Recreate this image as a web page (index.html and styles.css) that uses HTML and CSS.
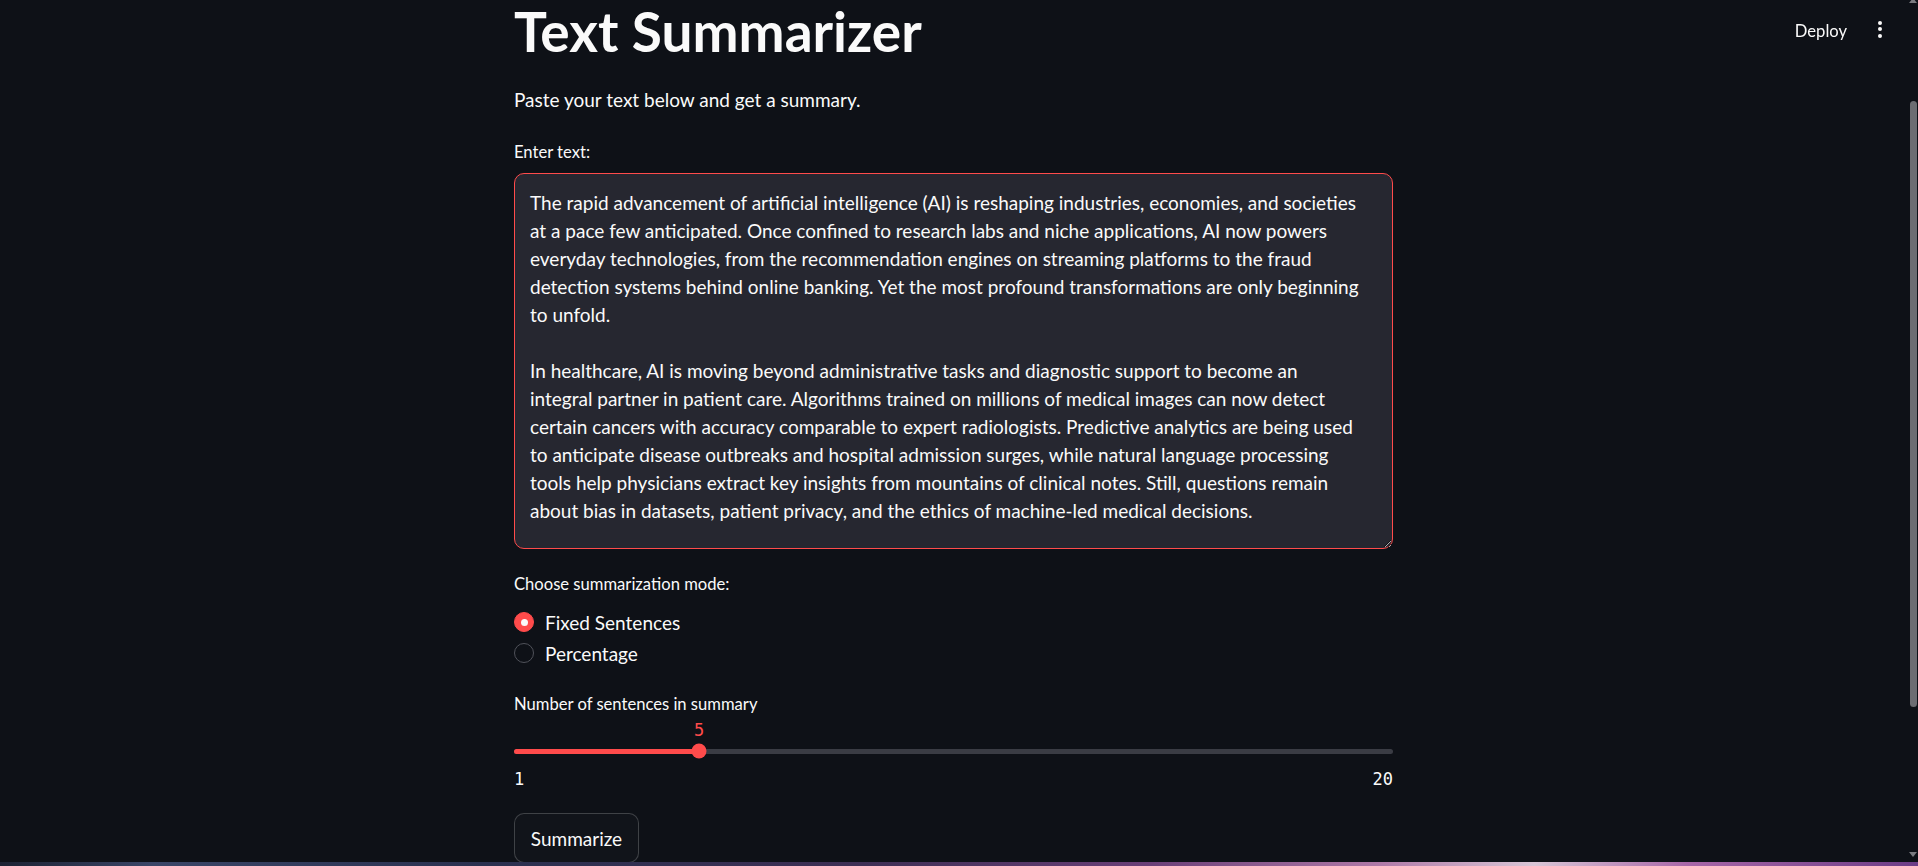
FILE: index.html
```html
<!DOCTYPE html>
<html lang="en">
<head>
<meta charset="utf-8">
<title>Text Summarizer</title>
<link rel="stylesheet" href="styles.css">
</head>
<body>
<header class="app-header">
  <span class="deploy">Deploy</span>
  <span class="kebab"><i></i><i></i><i></i></span>
</header>
<main class="main">
  <div class="block">
    <h1 class="title">Text Summarizer</h1>
    <p class="intro">Paste your text below and get a summary.</p>
    <label class="wlabel lbl-text" for="txt">Enter text:</label>
    <textarea id="txt" class="ta" wrap="off" spellcheck="false">The rapid advancement of artificial intelligence (AI) is reshaping industries, economies, and societies
at a pace few anticipated. Once confined to research labs and niche applications, AI now powers
everyday technologies, from the recommendation engines on streaming platforms to the fraud
detection systems behind online banking. Yet the most profound transformations are only beginning
to unfold.

In healthcare, AI is moving beyond administrative tasks and diagnostic support to become an
integral partner in patient care. Algorithms trained on millions of medical images can now detect
certain cancers with accuracy comparable to expert radiologists. Predictive analytics are being used
to anticipate disease outbreaks and hospital admission surges, while natural language processing
tools help physicians extract key insights from mountains of clinical notes. Still, questions remain
about bias in datasets, patient privacy, and the ethics of machine-led medical decisions.</textarea>
    <div class="wlabel lbl-mode">Choose summarization mode:</div>
    <div class="radios">
      <div class="radio checked"><span class="dot"></span><span>Fixed Sentences</span></div>
      <div class="radio"><span class="dot"></span><span>Percentage</span></div>
    </div>
    <div class="wlabel lbl-num">Number of sentences in summary</div>
    <div class="slider">
      <div class="value-row"><span class="value" style="left:21.05%">5</span></div>
      <div class="track-wrap">
        <div class="track">
          <div class="fill" style="width:21.05%"></div>
          <span class="thumb" style="left:21.05%"></span>
        </div>
      </div>
      <div class="ticks"><span>1</span><span>20</span></div>
    </div>
    <button class="btn" type="button">Summarize</button>
  </div>
</main>
<div class="scrollbar">
  <span class="arrow up"></span>
  <span class="thumb-bar"></span>
  <span class="arrow down"></span>
</div>
<div class="edge"></div>
</body>
</html>
```
FILE: styles.css
```css
* { box-sizing: border-box; }
html, body { margin: 0; padding: 0; }
body {
  background: #0e1117;
  color: #fafafa;
  font-family: "Lato", "Noto Sans", sans-serif;
  height: 866px;
  overflow: hidden;
}
.app-header {
  position: fixed;
  top: 0;
  right: 0;
  height: 60px;
  display: flex;
  align-items: flex-start;
  gap: 31px;
  padding: 19px 36px 0 0;
}
.deploy { font-size: 16.6px; line-height: 24px; color: #fafafa; }
.kebab { display: flex; flex-direction: column; gap: 2.3px; padding-top: 2px; }
.kebab i { width: 4px; height: 4px; border-radius: 50%; background: #fafafa; display: block; }

.main { padding-right: 10px; }
.block { width: 880px; margin: 0 auto; display: flex; flex-direction: column; align-items: flex-start; }

.title {
  margin: -2px 0 0;
  height: 66px;
  line-height: 66px;
  font-size: 55px;
  font-weight: 700;
}
.intro { margin: 22px 0 0; font-size: 19px; line-height: 28px; }
.wlabel { font-size: 16.6px; line-height: 24px; display: block; }
.lbl-text { margin-top: 26px; }
.ta {
  margin-top: 9px;
  width: 879px;
  height: 376px;
  background: #262730;
  color: #fafafa;
  border: 1px solid #ff4b4b;
  border-radius: 10px;
  padding: 15px 15px;
  font-family: "Lato", "Noto Sans", sans-serif;
  font-size: 19px;
  line-height: 28px;
  resize: vertical;
  overflow: hidden;
  outline: none;
  color-scheme: dark;
}
.lbl-mode { margin-top: 23px; }
.radios { margin-top: 12px; display: flex; flex-direction: column; gap: 3px; }
.radio { display: flex; align-items: center; gap: 11px; height: 28px; font-size: 19px; }
.dot {
  width: 20px; height: 20px; border-radius: 50%;
  border: 1.5px solid #50525a; background: #0e1117;
  display: flex; align-items: center; justify-content: center;
}
.radio.checked .dot { background: #ff4b4b; border-color: #ff4b4b; }
.radio.checked .dot::after { content: ""; width: 7px; height: 7px; border-radius: 50%; background: #fafafa; }
.lbl-num { margin-top: 25px; }

.slider { width: 879px; }
.value-row { position: relative; height: 26px; }
.value {
  position: absolute; top: 1px; transform: translateX(-50%);
  font-family: "DejaVu Sans Mono", "Liberation Mono", monospace;
  font-size: 17px; line-height: 26px; color: #ff4b4b;
}
.track-wrap { height: 18px; display: flex; align-items: center; }
.track { position: relative; width: 100%; height: 5px; border-radius: 3px; background: #3a3c44; }
.fill { height: 100%; border-radius: 3px; background: #ff4b4b; }
.thumb {
  position: absolute; top: 50%; width: 15px; height: 15px; border-radius: 50%;
  background: #ff4b4b; transform: translate(-50%, -50%);
}
.ticks {
  margin-top: 9px; height: 20px; display: flex; justify-content: space-between;
  font-family: "DejaVu Sans Mono", "Liberation Mono", monospace;
  font-size: 17px; line-height: 20px; color: #fafafa;
}
.btn {
  margin-top: 24px;
  height: 50px;
  width: 125px;
  padding: 0;
  background: #11141a;
  color: #fafafa;
  border: 1px solid rgba(250,250,250,0.2);
  border-radius: 10px;
  font-family: "Lato", "Noto Sans", sans-serif;
  font-size: 19px;
}

.scrollbar { position: fixed; top: 0; right: 0; width: 10px; height: 862px; }
.thumb-bar { position: absolute; left: 2px; top: 101px; width: 7px; height: 606px; border-radius: 4px; background: #6c6d72; }
.arrow { position: absolute; left: 1px; width: 0; height: 0; border-left: 4px solid transparent; border-right: 4px solid transparent; }
.arrow.up { top: -2px; border-bottom: 5px solid #7a7b80; }
.arrow.down { top: 852px; border-top: 5px solid #7a7b80; }

.edge {
  position: fixed; left: 0; right: 0; bottom: 0; height: 4px;
  background: linear-gradient(90deg, #1c2233 0%, #3a4668 8%, #2a3150 25%, #3e2f55 45%, #6a3f78 60%, #b07aa8 72%, #d9c6d6 80%, #a866a8 88%, #6b3c86 100%);
}
```
